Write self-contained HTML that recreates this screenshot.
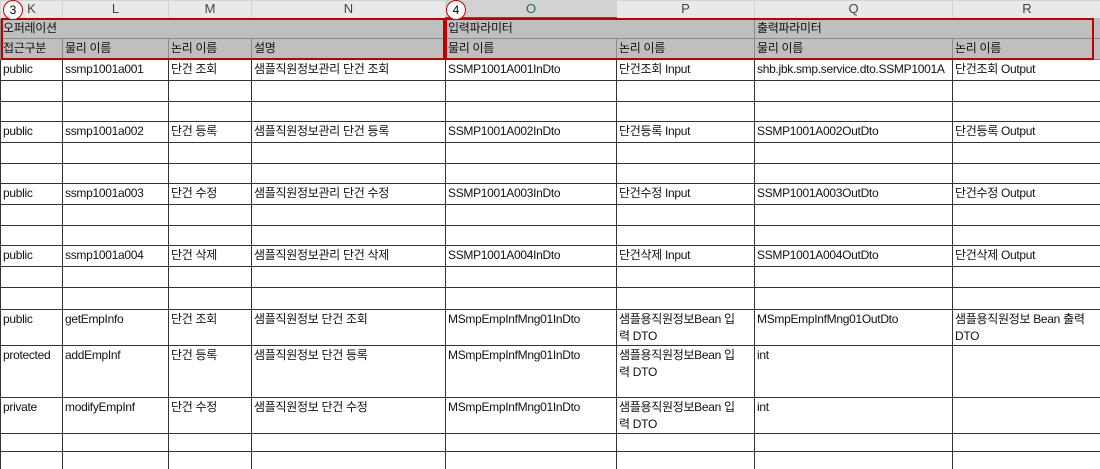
<!DOCTYPE html>
<html><head><meta charset="utf-8"><style>
html,body{margin:0;padding:0;background:#fff;width:1100px;height:469px;overflow:hidden}
body{font-family:"Liberation Sans","Noto Sans CJK KR",sans-serif;font-size:12px;color:#111;position:relative}
table{border-collapse:collapse;table-layout:fixed;position:absolute;left:0;top:0;width:1101px}
td{border:1px solid #333;padding:0 2px;vertical-align:top;line-height:17px;white-space:nowrap;overflow:hidden;box-sizing:border-box;letter-spacing:-0.3px}
tr.d td{padding-top:1px}
tr.h td{background:#e9e9e9;border:1px solid #d4d4d4;border-bottom:1px solid #bbb;text-align:center;color:#444;font-size:13px;line-height:16px;padding:0;letter-spacing:0}
tr.h td.sel{background:#d2d2d2;color:#217346;border-bottom:2px solid #217346}
tr.g td{background:#bfbfbf;border:1px solid #8a8a8a;padding-top:1px}
.red{position:absolute;border:2px solid #c00000;box-sizing:border-box}
.circ{position:absolute;width:20px;height:20px;border:1px solid #c00000;border-radius:50%;background:#fff;box-sizing:border-box;text-align:center;line-height:18px;font-size:12px;color:#000}
</style></head><body>
<table>
<colgroup><col style="width:62px"><col style="width:106px"><col style="width:83px"><col style="width:194px"><col style="width:171px"><col style="width:138px"><col style="width:198px"><col style="width:149px"></colgroup>
<tr class="h" style="height:17px"><td>K</td><td>L</td><td>M</td><td>N</td><td class="sel">O</td><td>P</td><td>Q</td><td>R</td></tr>
<tr class="g" style="height:20px"><td colspan="4">오퍼레이션</td><td colspan="2">입력파라미터</td><td colspan="2">출력파라미터</td></tr>
<tr class="g" style="height:21px"><td>접근구분</td><td>물리 이름</td><td>논리 이름</td><td>설명</td><td>물리 이름</td><td>논리 이름</td><td>물리 이름</td><td>논리 이름</td></tr>
<tr class="d" style="height:21px"><td>public</td><td>ssmp1001a001</td><td>단건 조회</td><td>샘플직원정보관리 단건 조회</td><td>SSMP1001A001InDto</td><td>단건조회 Input</td><td>shb.jbk.smp.service.dto.SSMP1001A</td><td>단건조회 Output</td></tr>
<tr style="height:21px"><td></td><td></td><td></td><td></td><td></td><td></td><td></td><td></td></tr>
<tr style="height:20px"><td></td><td></td><td></td><td></td><td></td><td></td><td></td><td></td></tr>
<tr class="d" style="height:21px"><td>public</td><td>ssmp1001a002</td><td>단건 등록</td><td>샘플직원정보관리 단건 등록</td><td>SSMP1001A002InDto</td><td>단건등록 Input</td><td>SSMP1001A002OutDto</td><td>단건등록 Output</td></tr>
<tr style="height:21px"><td></td><td></td><td></td><td></td><td></td><td></td><td></td><td></td></tr>
<tr style="height:20px"><td></td><td></td><td></td><td></td><td></td><td></td><td></td><td></td></tr>
<tr class="d" style="height:21px"><td>public</td><td>ssmp1001a003</td><td>단건 수정</td><td>샘플직원정보관리 단건 수정</td><td>SSMP1001A003InDto</td><td>단건수정 Input</td><td>SSMP1001A003OutDto</td><td>단건수정 Output</td></tr>
<tr style="height:21px"><td></td><td></td><td></td><td></td><td></td><td></td><td></td><td></td></tr>
<tr style="height:20px"><td></td><td></td><td></td><td></td><td></td><td></td><td></td><td></td></tr>
<tr class="d" style="height:21px"><td>public</td><td>ssmp1001a004</td><td>단건 삭제</td><td>샘플직원정보관리 단건 삭제</td><td>SSMP1001A004InDto</td><td>단건삭제 Input</td><td>SSMP1001A004OutDto</td><td>단건삭제 Output</td></tr>
<tr style="height:21px"><td></td><td></td><td></td><td></td><td></td><td></td><td></td><td></td></tr>
<tr style="height:22px"><td></td><td></td><td></td><td></td><td></td><td></td><td></td><td></td></tr>
<tr class="d" style="height:36px"><td>public</td><td>getEmpInfo</td><td>단건 조회</td><td>샘플직원정보 단건 조회</td><td>MSmpEmpInfMng01InDto</td><td>샘플용직원정보Bean 입<br>력 DTO</td><td>MSmpEmpInfMng01OutDto</td><td>샘플용직원정보 Bean 출력<br>DTO</td></tr>
<tr class="d" style="height:52px"><td>protected</td><td>addEmpInf</td><td>단건 등록</td><td>샘플직원정보 단건 등록</td><td>MSmpEmpInfMng01InDto</td><td>샘플용직원정보Bean 입<br>력 DTO</td><td>int</td><td></td></tr>
<tr class="d" style="height:36px"><td>private</td><td>modifyEmpInf</td><td>단건 수정</td><td>샘플직원정보 단건 수정</td><td>MSmpEmpInfMng01InDto</td><td>샘플용직원정보Bean 입<br>력 DTO</td><td>int</td><td></td></tr>
<tr style="height:18px"><td></td><td></td><td></td><td></td><td></td><td></td><td></td><td></td></tr>
<tr style="height:18px"><td></td><td></td><td></td><td></td><td></td><td></td><td></td><td></td></tr>
</table>
<div class="red" style="left:1px;top:18px;width:444px;height:42px"></div>
<div class="red" style="left:445px;top:18px;width:649px;height:42px"></div>
<div class="circ" style="left:3px;top:0px">3</div>
<div class="circ" style="left:446px;top:0px">4</div>
</body></html>
